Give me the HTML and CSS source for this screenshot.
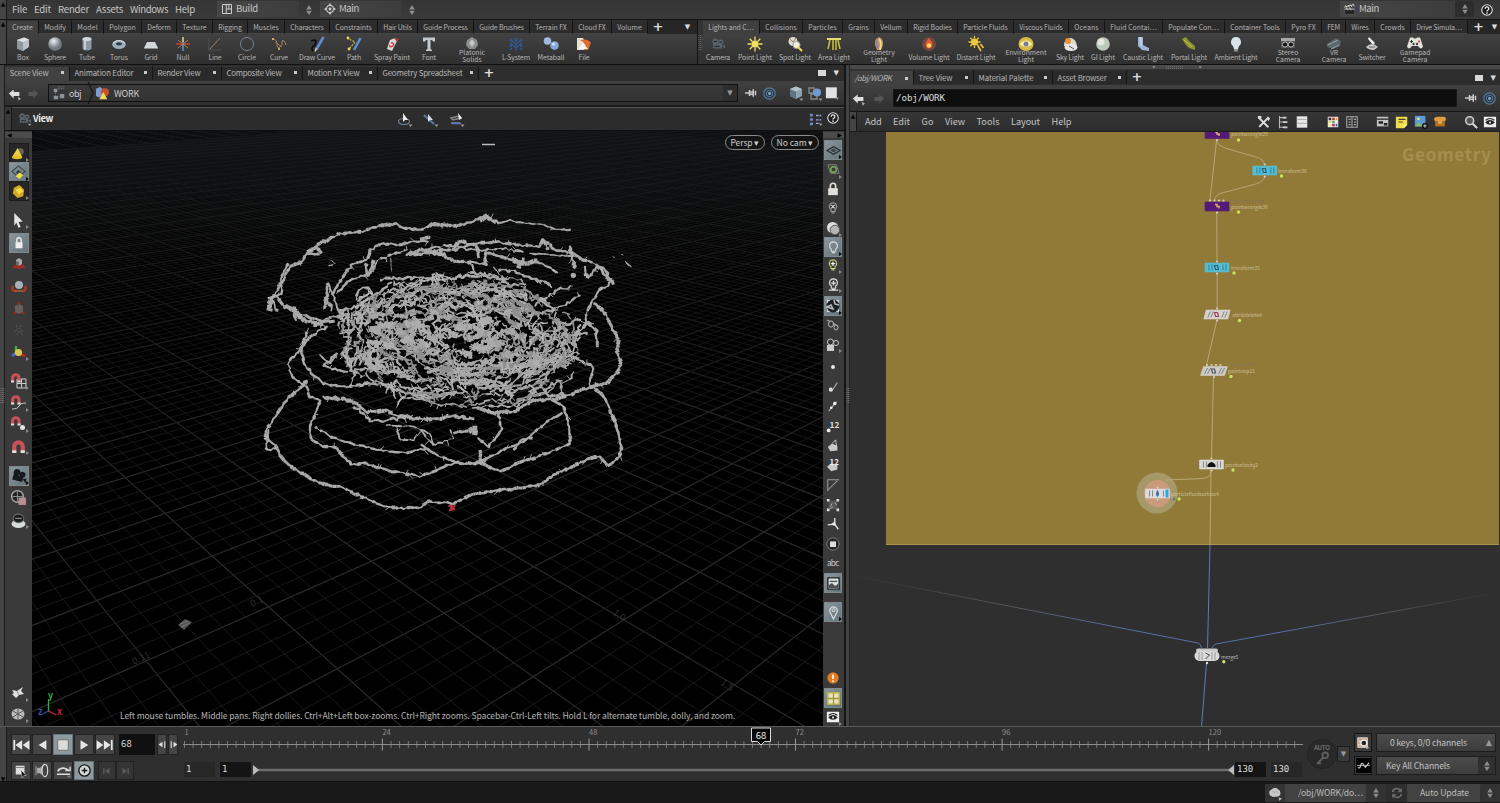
FILE: index.html
```html
<!DOCTYPE html>
<html lang="en">
<head>
<meta charset="utf-8">
<title>Scene</title>
<link rel="stylesheet" href="styles.css">
</head>
<body>
<div class="app">
  <header class="menubar">
    <div class="grip">▲</div>
    <nav class="menus">
      <span data-fit="15">File</span><span data-fit="17">Edit</span><span data-fit="31">Render</span><span data-fit="27">Assets</span><span data-fit="38">Windows</span><span data-fit="20">Help</span>
    </nav>
    <div class="desk"><i data-i="layout"></i><span data-fit="22">Build</span></div><div class="updown"><i data-i="updown"></i></div>
    <div class="desk desk2"><i data-i="target"></i><span data-fit="20">Main</span></div><div class="updown"><i data-i="updown"></i></div>
    <div class="grow"></div>
    <div class="desk desk3"><i data-i="clap"></i><span data-fit="20">Main</span></div><div class="updown dark"><i data-i="updown"></i></div>
    <div class="helpicon"><i data-i="help"></i></div>
  </header>

  <section class="shelves">
    <div class="grip">▲</div>
    <div class="shelf shelf-a"><div class="stabs" id="stabsA"></div><div class="tools" id="toolsA"></div></div>
    <div class="shelfsplit"><i data-i="dots"></i></div>
    <div class="shelf shelf-b"><div class="stabs" id="stabsB"></div><div class="tools" id="toolsB"></div></div>
  </section>

  <main class="panes">
    <div class="edge"><i data-i="dots"></i></div>
    <section class="pane scene">
      <div class="ptabs" id="ptabsA"></div>
      <div class="pathbar">
        <i data-i="back"></i><i data-i="fwd"></i>
        <div class="crumbs"><i data-i="objnet"></i><span data-fit="12">obj</span><i class="chev" data-i="chev"></i><i data-i="shapes"></i><span class="cur" data-fit="25">WORK</span><div class="grow"></div><div class="drop">▼</div></div>
        <div class="pathicons"><i data-i="pin"></i><i class="rad" data-i="radar"></i><i class="gapl" data-i="cubeb"></i><i data-i="ghost"></i><i data-i="white"></i></div>
      </div>
      <div class="viewbar">
        <div class="grip">▲</div>
        <i class="vcam" data-i="camera"></i><b data-fit="20">View</b>
        <div class="vmid"><i data-i="sel1"></i><i data-i="sel2"></i><i data-i="sel3"></i></div>
        <div class="vend"><i data-i="nodes"></i><i data-i="help"></i></div>
      </div>
      <div class="viewrow">
        <div class="side left"><div class="nub">◀</div><div class="col" id="leftcol"></div></div>
        <div class="viewport">
          <svg id="scene" viewBox="32 131 791 595" width="791" height="595"></svg>
          <div class="pill persp"><span data-fit="22">Persp</span> ▾</div>
          <div class="pill cam"><span data-fit="30">No cam</span> ▾</div>
          <div class="hint"><span data-fit="615">Left mouse tumbles. Middle pans. Right dollies. Ctrl+Alt+Left box-zooms. Ctrl+Right zooms. Spacebar-Ctrl-Left tilts. Hold L for alternate tumble, dolly, and zoom.</span></div>
        </div>
        <div class="side right"><div class="nub r">▶</div><div class="col" id="rightcol"></div></div>
      </div>
    </section>
    <div class="vsplit"><i data-i="dots"></i></div>
    <section class="pane network">
      <div class="hsplit"><i data-i="dotsh"></i></div>
      <div class="ptabs" id="ptabsB"></div>
      <div class="pathbar npath">
        <i data-i="back"></i><i data-i="fwd"></i>
        <div class="field"><span data-fit="49">/obj/WORK</span></div>
        <div class="pathicons"><i data-i="pin"></i><i class="rad" data-i="radar"></i></div>
      </div>
      <div class="nmenu">
        <div class="grip">▲</div>
        <nav class="nmenus"><span data-fit="16.5">Add</span><span data-fit="17">Edit</span><span data-fit="12">Go</span><span data-fit="20">View</span><span data-fit="23">Tools</span><span data-fit="29">Layout</span><span data-fit="20">Help</span></nav>
        <div class="nicons"><i data-i="wrench"></i><i data-i="tree"></i><i data-i="list"></i><i class="g2" data-i="palette"></i><i data-i="table"></i><i class="g2" data-i="netbox"></i><i data-i="sticky"></i><i data-i="image"></i><i data-i="box3"></i><i class="g2" data-i="search"></i><i data-i="eye"></i></div>
      </div>
      <svg id="graph" viewBox="850 132 650 594" width="650" height="594"></svg>
    </section>
  </main>

  <section class="playbar">
    <div class="grip low">▼</div>
    <div class="transport">
      <div class="btns"><i data-i="first"></i><i data-i="rev"></i><i class="on" data-i="stop"></i><i data-i="play"></i><i data-i="last"></i><div class="frame"><span data-fit="11">68</span></div><i class="nar" data-i="stepb"></i><i class="nar" data-i="stepf"></i></div>
      <div class="btns small"><i data-i="tlmenu"></i><i data-i="speaker"></i><i data-i="loop"></i><i class="on" data-i="clock"></i><i class="dim" data-i="kprev"></i><i class="dim" data-i="knext"></i></div>
    </div>
    <div class="timeline">
      <svg id="ticks" viewBox="180 728 1126 30" width="1126" height="30"></svg>
      <div class="range"><div class="num lite">1</div><div class="num">1</div><svg class="slider" viewBox="0 0 983 14" width="983" height="14"><path d="M4 7H978" stroke="#6d6d6d" stroke-width="2.4"/><path d="M1 2l6 5-6 5zM982 2l-6 5 6 5z" fill="#bbb"/></svg><div class="num r">130</div><div class="num lite">130</div></div>
    </div>
    <div class="auto"><i data-i="auto"></i><div class="autodrop">▼</div></div>
    <div class="keys">
      <div class="krow"><i data-i="keyset"></i><div class="kbtn"><span data-fit="77">0 keys, 0/0 channels</span><em>▲</em></div></div>
      <div class="krow"><i data-i="wave"></i><div class="kbtn kall"><span data-fit="64">Key All Channels</span><i data-i="updown"></i></div></div>
    </div>
  </section>

  <footer class="status">
    <div class="brain"><i data-i="brain"></i></div>
    <div class="sbtn"><span data-fit="65">/obj/WORK/do…</span></div><i data-i="updown"></i><i class="refresh" data-i="refresh"></i>
    <div class="sbtn wide"><span data-fit="49">Auto Update</span></div><i data-i="updown"></i>
  </footer>
</div>
<script src="app.js"></script>
</body>
</html>
```
FILE: styles.css
```css
* { box-sizing: border-box; }
body { margin: 0; background: #1a1a1a; overflow: hidden; }
.app { width: 1500px; height: 803px; display: flex; flex-direction: column; font-family: "Noto Sans CJK SC", "Noto Sans", sans-serif; color: #b9b9b9; font-size: 8px; line-height: 1; white-space: nowrap; }
i, em { font-style: normal; display: block; }
i svg { display: block; overflow: visible; }
span { display: inline-block; }
.grow { flex: 1; }
.grip { width: 7px; background: #454545; color: #050505; font: 6px/7px "DejaVu Sans", sans-serif; text-align: center; border-right: 1px solid #161616; flex: none; overflow: hidden; }

.menubar { height: 20px; display: flex; background: linear-gradient(#353535, #3a3a3a); border-bottom: 1px solid #141414; font-size: 9.6px; color: #c6c6c6; }
.menus { display: flex; gap: 7px; padding-left: 5px; width: 210px; align-items: center; }
.desk { width: 82px; margin: 1px 0 2px; background: linear-gradient(90deg, #464646, #3d3d3d); display: flex; align-items: center; padding-left: 4px; gap: 3px; }
.desk2 { width: 82px; margin-left: 2px; }
.desk3 { width: 115px; padding-left: 3px; }
.updown { width: 19px; display: flex; align-items: center; justify-content: center; }
.updown.dark { background: #2d2d2d; margin: 1px 0 2px; }
.helpicon { width: 26px; display: flex; align-items: center; justify-content: center; }

.shelves { height: 45px; display: flex; border-bottom: 1px solid #101010; }
.shelf { display: flex; flex-direction: column; }
.shelf-a { width: 690px; }
.shelf-b { width: 797px; }
.shelfsplit { width: 6px; background: #333; border-left: 1px solid #111; display: flex; align-items: center; justify-content: center; }
.stabs { height: 14px; background: #262626; display: flex; font-size: 6.9px; color: #b4b4b4; }
.stab { border-right: 1.5px solid #121212; border-top: 1px solid #303030; display: flex; align-items: center; justify-content: center; background: #2c2c2c; border-bottom: 1px solid #454545; }
.stab.on { background: #3f3f3f; border-bottom-color: #3f3f3f; }
.splus { width: 20px; font: bold 13px/13px "DejaVu Sans", sans-serif; text-align: center; color: #ddd; }
.scaret { margin-left: auto; width: 19px; font: 7px/14px "DejaVu Sans", sans-serif; text-align: center; color: #ddd; }
.shelf-b .splus { width: 21px; }
.shelf-b .scaret { width: 11px; margin-left: 0; }
.tools { height: 30px; background: linear-gradient(#414141, #2f2f2f); display: flex; }
.tool { display: flex; flex-direction: column; align-items: center; font-size: 6.9px; color: #b6b6b6; padding-top: 2px; }
.tool svg { width: 16px; height: 16px; }
.tool span { line-height: 7px; text-align: center; margin-top: 1.5px; }
.tool.two { font-size: 6.8px; }
.tool.two span { margin-top: -3px; }

.panes { height: 661px; display: flex; background: #222; }
.edge { width: 5px; background: #454545; border-right: 1px solid #1a1a1a; display: flex; align-items: center; }
.pane { display: flex; flex-direction: column; }
.scene { width: 839px; }
.network { width: 650px; }
.vsplit { width: 6px; background: #434343; border-left: 2px solid #141414; border-right: 1px solid #222; display: flex; align-items: center; }
.hsplit { height: 5px; background: #484848; display: flex; justify-content: center; align-items: center; border-bottom: 1px solid #333; }
.ptabs { height: 16px; background: #2d2d2d; display: flex; padding-top: 1px; font-size: 7.8px; color: #b8b8b8; }
.ptab { border-right: 1.5px solid #151515; background: #2a2a2a; display: flex; align-items: center; justify-content: space-between; padding: 0 5px 2px 4.5px; border-top: 1px solid #333; margin-bottom: 1px; }
.ptab.on { background: #414141; margin-bottom: 0; padding-bottom: 3px; }
.ptab u { width: 3px; height: 3px; background: #c9c9c9; }
.network .ptab.on { font-style: italic; }
.pplus { width: 20px; text-align: center; font: bold 13px/13px "DejaVu Sans", sans-serif; color: #ddd; }
.pend { margin-left: auto; display: flex; align-items: center; gap: 8px; padding: 0 5px 2px 0; font: 7px/14px "DejaVu Sans", sans-serif; color: #ddd; }
.pend b { width: 8px; height: 6px; background: #d8d8d8; }
.network .ptabs { height: 15px; padding-top: 0; }
.network .pend { padding-right: 4px; padding-bottom: 0; }
.network .ptab, .network .ptab.on { padding-bottom: 0; }
.pathbar { height: 24px; background: linear-gradient(#414141, #303030); display: flex; align-items: center; padding-left: 3px; font-size: 9px; color: #ccc; }
.pathbar > i { width: 18px; }
.scene .pathbar > i:nth-child(2) { width: 22px; }
.crumbs { width: 690px; height: 18px; border: 1px solid #111; background: linear-gradient(#3a3a3a, #333); display: flex; align-items: center; gap: 3px; padding-left: 3px; }
.crumbs .chev { width: 9px; }
.crumbs .cur { margin-left: 2px; }
.drop { width: 14px; align-self: stretch; background: #2e2e2e; font: 7px/16px "DejaVu Sans", sans-serif; text-align: center; color: #999; }
.pathicons { display: flex; gap: 2.5px; align-items: center; margin-left: 7px; }
.pathicons .rad { margin-left: 3px; }
.pathicons .gapl { margin-left: 10px; }
.npath { height: 26px; padding-left: 2px; }
.npath > i { width: 20px; }
.field { width: 564px; margin-left: 1px; height: 18px; background: #0e0e0e; border: 1px solid #181818; padding: 3px 2px; font: 9.2px/10px "DejaVu Sans Mono", monospace; color: #ddd; }
.npath .pathicons { margin-left: 8px; }
.viewbar { height: 26px; margin-top: 0; background: #2c2c2c; border-top: 2px solid #191919; box-shadow: inset 0 1px #555; border-bottom: 1px solid #101010; display: flex; align-items: center; font-size: 9px; color: #eee; }
.viewbar .grip { align-self: stretch; background: #3a3a3a; }
.vcam { margin: 0 1px 0 5px; }
.vmid { display: flex; gap: 10px; margin-left: 344px; }
.vend { display: flex; gap: 4px; margin-left: auto; padding-right: 5px; }
.viewrow { display: flex; height: 595px; }
.side { width: 27px; background: #3a3a3a; display: flex; flex-direction: column; }
.side.right { width: 21px; }
.nub { height: 6px; margin-top: 1px; background: #4b4b4b; font: 6px/6px "DejaVu Sans", sans-serif; color: #000; padding-left: 2px; }
.nub.r { text-align: right; padding-right: 2px; }
.col { display: flex; flex-direction: column; align-items: center; }
.right .col { padding-right: 1px; }
.cell { width: 18px; height: 18px; display: flex; align-items: center; justify-content: center; flex: none; position: relative; }
.right .cell { width: 16px; }
.cell.on { background: linear-gradient(135deg, #8a979b, #64747a); outline: 1px solid #7c8a90; }
.cell.dk { background: #262626; outline: 1px solid #1c1c1c; }
.cell.arrow::after { content: ""; position: absolute; right: -1px; bottom: 0; border-left: 3px solid #888; border-top: 2px solid transparent; border-bottom: 2px solid transparent; }
.cell.on.arrow::after { border-left-color: #0b0b0b; }
.viewport { position: relative; width: 791px; height: 595px; background: #000; overflow: hidden; }
.viewport > svg { display: block; }
.pill { position: absolute; top: 4px; height: 15px; border: 1px solid #8b8b8b; border-radius: 8px; background: #141414; font-size: 8.6px; line-height: 12px; text-align: center; color: #ccc; }
.persp { left: 693px; width: 40px; }
.cam { left: 739px; width: 48px; }
.hint { position: absolute; left: 88px; top: 579px; font-size: 8.6px; line-height: 10px; color: #b4b4b4; }

.nmenu { height: 21px; background: linear-gradient(#363636, #2d2d2d); border-top: 1px solid #151515; border-bottom: 1px solid #1c1c1c; display: flex; font-size: 9.2px; color: #c4c4c4; }
.nmenus { display: flex; align-items: center; padding-left: 8px; gap: 11.5px; width: 400px; }
.nicons { display: flex; align-items: center; gap: 5px; }
.nicons .g2 { margin-left: 12px; }
#graph { display: block; background: #2f2f2f; }

.playbar { height: 56px; background: #2f2f2f; border-top: 1px solid #5a5a5a; display: flex; border-bottom: 1px solid #111; }
.grip.low { line-height: 104px; }
.transport { width: 173px; padding: 7px 0 0 4px; display: flex; flex-direction: column; gap: 6px; }
.btns { display: flex; height: 21px; gap: 1px; }
.btns > i { width: 20px; background: #454545; border: 1px solid #222; display: flex; align-items: center; justify-content: center; }
.btns > i.on { background: #8e9a9e; border-color: #66757b; }
.btns .nar { width: 10px; margin-left: 0; }
.btns.small { height: 19px; }
.btns .dim { width: 18px; background: #353535; margin: 0 -1px 0 0; }
.btns.small .on + .dim { margin-left: 3px; }
.frame { width: 36px; margin-right: 1px; background: #101010; font-size: 9.4px; line-height: 18px; padding-left: 2px; margin-left: 3px; color: #ddd; }
.timeline { width: 1126px; padding-top: 0; }
#ticks { display: block; }
.range { display: flex; align-items: center; height: 15px; margin-top: 5px; padding-left: 4px; }
.num { width: 31px; height: 15px; background: #141414; color: #ddd; font: 9px/15px "DejaVu Sans Mono", monospace; padding-left: 2px; }
.num.lite { background: #272727; margin-right: 5px; }
.num.r + .num { margin-left: 5px; margin-right: 0; }
.slider { display: block; flex: none; }
.range .num + .slider { margin-left: 1px; }
.auto { display: flex; align-items: center; padding-left: 1px; width: 47px; }
.autodrop { width: 13px; height: 16px; background: #3a3a3a; border: 1px solid #1d1d1d; font: 7px/14px "DejaVu Sans", sans-serif; text-align: center; color: #999; }
.keys { padding: 6px 0 0 1px; display: flex; flex-direction: column; gap: 4px; }
.krow { display: flex; height: 19px; gap: 4px; }
.krow > i { width: 18px; background: #3c3c3c; border: 1px solid #161616; display: flex; align-items: center; justify-content: center; }
.kbtn { width: 120px; background: linear-gradient(#4c4c4c, #3c3c3c); border: 1px solid #1d1d1d; display: flex; align-items: center; justify-content: space-between; padding: 0 3px 1px 13px; font-size: 8.6px; color: #c2c2c2; }
.kbtn em { font: 8px/9px "DejaVu Sans", sans-serif; color: #999; }
.kall { padding: 0 0 1px 9px; }
.kall i { width: 17px; align-self: stretch; background: #303030; display: flex; align-items: center; justify-content: center; margin-bottom: -1px; }
.status { height: 21px; background: #191919; display: flex; align-items: center; padding-left: 1265px; font-size: 8.6px; color: #bdbdbd; }
.status > i, .brain { height: 18px; width: 20px; display: flex; align-items: center; justify-content: center; background: #333; }
.sbtn { width: 81px; height: 18px; background: #424242; display: flex; align-items: center; padding: 0 0 1px 13px; }
.status .refresh { width: 21px; background: #2d2d2d; }
.wide { width: 73px; }
```
FILE: app.js
```js
const G = '#cfcfcf';
const tri = '<path d="M11.5 13.5h4l-2 2.4z" fill="#999"/>';
const magnet = '<path d="M2 14V8a6 6 0 0 1 12 0v6h-4V8a2 2 0 0 0-4 0v6z" fill="#c8505a"/><path d="M2 11.500h4V14H2zM10 11.500h4V14h-4z" fill="#ddd"/>';
const smag = '<path d="M0 9V5a4.800 4.800 0 0 1 9.600 0v4H6.500V5a1.700 1.700 0 0 0-3.400 0v4z" fill="#c8505a"/><path d="M0 7.500h3.100V9.500H0zM6.500 7.500h3.100V9.500H6.500z" fill="#ddd"/>';
const bulb = c => `<path d="M8 2a4.2 4.2 0 0 0-2.3 7.7V12h4.6V9.7A4.2 4.2 0 0 0 8 2z" fill="none" stroke="${c}" stroke-width="1.2"/><path d="M6.2 13.5h3.6" stroke="${c}" stroke-width="1.4"/>`;
const star = (c, cx, cy, r, R) => { let s = ''; for (let k = 0; k < 8; k++) { const a = k * Math.PI / 4; s += `M${cx + r * Math.cos(a)} ${cy + r * Math.sin(a)}L${cx + R * Math.cos(a)} ${cy + R * Math.sin(a)}`; } return `<path d="${s}" stroke="${c}" stroke-width="1.3"/><circle cx="${cx}" cy="${cy}" r="${r}" fill="${c}"/>`; };
const cam = c => `<circle cx="5.5" cy="5.5" r="3" fill="${c}"/><circle cx="10.8" cy="6.2" r="2.6" fill="${c}"/><path d="M3 8h9v4.5H3zM12 10l3-1.6v4.4z" fill="${c}"/><path d="M4 5.5h3M9.5 6.2H12M4.5 10.4h5" stroke="#1b2226" stroke-width="1"/>`;

/* each entry: [size, markup on a 16-unit box] */
const ICONS = {
  layout: [12, `<path d="M2 2h12v12H2zM7 2v12M7 8h7M10.5 2v6" fill="none" stroke="${G}" stroke-width="1.3"/>`],
  target: [12, `<circle cx="8" cy="8" r="4.6" fill="none" stroke="${G}" stroke-width="1.4"/><circle cx="8" cy="8" r="1.9" fill="${G}"/><path d="M8 0l2 3H6zM8 16l-2-3h4zM0 8l3-2v4zM16 8l-3 2V6z" fill="${G}"/>`],
  clap: [13, `<path d="M2 7h12v7H2z" fill="#222" stroke="#555"/><path d="M1.500 5l12-3M3 3l2 3M6 2.500l2 3M9 2l2 3M12 1l2 3M2 7.500h12M4 6l2 3M8 6l2 3" stroke="${G}" stroke-width="1.1"/>`],
  updown: [10, '<path d="M8 0l4.500 7h-9zM8 16l4.500-7h-9z" fill="#8c8c8c"/>'],
  help: [12, '<circle cx="8" cy="8" r="7" fill="#1d1d1d" stroke="#ddd" stroke-width="1.500"/><path d="M5.600 6.200a2.400 2.400 0 1 1 3.500 2.100Q8 9 8 10" fill="none" stroke="#eee" stroke-width="1.800"/><circle cx="8" cy="12.200" r="1.100" fill="#eee"/>'],
  dots: [5, '<path d="M3 -16v48M8 -16v48M13 -16v48" stroke="#8a8a8a" stroke-width="2.500" stroke-dasharray="2.500 4"/>'],
  dotsh: [5, '<path d="M-22 5h54M-22 11h54" stroke="#8a8a8a" stroke-width="2.500" stroke-dasharray="2.500 4"/><path d="M-66 4h10l-5 7zM82 4h10l-5 7z" fill="#999"/>'],
  back: [13, '<path d="M1 8l6-5v3h7v5H7v3z" fill="#dedede"/><path d="M12 12l4 2-3 3z" fill="#aaa"/>'],
  fwd: [13, '<path d="M15 8L9 3v3H3v5h6v3z" fill="#555"/>'],
  objnet: [14, '<path d="M2 3h4v4H2zM2 11h5v4H2zM9 9h5v5H9z" fill="#8b9498"/><path d="M7 3h7M4 7v4M8 12h2M7 1h7" stroke="#666" stroke-width="1.200" stroke-dasharray="2 1"/>'],
  chev: [16, '<path d="M4 -3l5 11-5 11" fill="none" stroke="#151515" stroke-width="1.200"/>'],
  shapes: [13, '<path d="M0 2l5-2 3 2v8l-4 3-4-2z" fill="#7c9bd0"/><circle cx="11" cy="6.500" r="5" fill="#c9502c"/><path d="M9 6l5 9H4z" fill="#f0d95a"/>'],
  pin: [12, '<path d="M0 8h6M6 4v8M6 6.500h5v3H6M11 3v10M14 5v6" stroke="#ccc" stroke-width="2"/>'],
  radar: [13, '<circle cx="8" cy="8" r="7" fill="#26374a" stroke="#5b7893" stroke-width="1.400"/><circle cx="8" cy="8" r="4" fill="none" stroke="#5f809e" stroke-width="1.200"/><circle cx="8" cy="8" r="1.700" fill="#8db2d6"/>'],
  cubeb: [16, '<path d="M2 4l6-2.500L14 4v7l-6 3-6-3z" fill="#8ea3ad"/><path d="M2 4l6 2.500V14l-6-3z" fill="#5d7683"/><path d="M2 4l6-2.500L14 4 8 6.500z" fill="#b4c4cb"/>' + tri],
  ghost: [16, '<path d="M2 3h5v5H2zM4 9h6v5H4z" fill="none" stroke="#888" stroke-width="1.300"/><circle cx="10" cy="7.500" r="4" fill="#6f9bd0"/>' + tri],
  white: [14, '<path d="M1 1.500h12.500V14H1z" fill="#e2e2e2"/><path d="M12 13h4l-2 3z" fill="#999"/>'],
  sel1: [16, '<ellipse cx="7" cy="10.500" rx="5.500" ry="3" fill="none" stroke="#6d7f96" stroke-width="1.200"/><path d="M6 2l5 7H8L6 11z" fill="#eee"/>' + tri],
  sel2: [16, '<path d="M1 4l10 9" stroke="#5f78a0" stroke-width="2.200"/><path d="M5 3l5 6H7L5 11z" fill="#ddd"/>' + tri],
  sel3: [16, '<path d="M2 7l8-2 2 2-8 2zM2 12h9" fill="none" stroke="#888" stroke-width="1.500"/><path d="M3 12.500h9" stroke="#5b7bd0" stroke-width="1.500"/><path d="M9 2l4 5-3 2z" fill="#eee"/>' + tri],
  nodes: [14, '<path d="M1 2h3.500v3H1zM1 7h3.500v3H1zM1 12h3.500v3H1z" fill="#6d86c8"/><path d="M8 4h6M8 9h6M8 13h5" stroke="#93a7d6" stroke-width="1.600" stroke-dasharray="3 1"/>' + tri],
  camera: [15, cam('#5c6468') + tri],
  wrench: [14, '<path d="M2 3l11 11M13.500 2.500l-11 11" stroke="#ddd" stroke-width="2.200"/><path d="M1 1h4v3H1zM11 2l4 2-2 3" fill="#ddd"/>'],
  tree: [14, '<path d="M4 1v14M4 3h7M4 8h7M4 14h7" stroke="#bbb" stroke-width="1.200"/><path d="M8 2h4v2H8zM8 7h5v2H8zM8 13h5v2H8z" fill="#ccc"/>'],
  list: [14, '<path d="M2 1.500h12v13H2z" fill="#e6e6e6"/><path d="M2 5h12M2 9.500h12" stroke="#a5a5a5"/>'],
  palette: [14, '<path d="M2 2h12v12H2z" fill="#eee"/><path d="M3 3h3v3H3z" fill="#333"/><path d="M7 3h3v3H7z" fill="#d03030"/><path d="M11 3h2v3h-2z" fill="#e8a020"/><path d="M3 7h3v2H3z" fill="#e8d050"/><path d="M7 7h3v2H7z" fill="#50a050"/><path d="M3 10h3v3H3z" fill="#f0f080"/><path d="M7 10h3v3H7z" fill="#c03060"/><path d="M11 10h2v3h-2z" fill="#4060c0"/>'],
  table: [14, '<path d="M2 2h12v12H2zM8 2v12M4 5h2.500M4 8h2.500M4 11h2.500M10 5h2.500M10 8h2.500M10 11h2.500" fill="none" stroke="#a8a8a8" stroke-width="1.200"/>'],
  netbox: [14, '<path d="M1 2h13v11H1z" fill="#c4c4c4"/><path d="M1 4h13v1.500H1zM3 7h5v3H3zM9 9h4v3H9z" fill="#222"/>'],
  sticky: [14, '<path d="M1 2h13v9l-4 4H1z" fill="#f0dd4a"/><path d="M4 5h8M4 8h5" stroke="#444" stroke-width="1.300"/><path d="M14 11h-4v4z" fill="#fff6a8"/>'],
  image: [14, '<path d="M1 1h12v12H1z" fill="#5a9ad8"/><path d="M1 13l4-5 3 3 2-2 3 4z" fill="#8ab56a"/><circle cx="5" cy="4.500" r="1.600" fill="#f6e070"/><circle cx="12.500" cy="12.500" r="3.500" fill="#111"/><path d="M12.500 10.500v4M10.500 12.500h4" stroke="#ddd"/>'],
  box3: [14, '<path d="M1 4l3-2h9l2 2-1 3H2z" fill="#e09a40"/><path d="M2.500 7h11v6h-11z" fill="#b56f24"/><path d="M6 7h4v3H6z" fill="#e7b469"/>'],
  search: [14, '<circle cx="6.500" cy="6.500" r="4.500" fill="#555" stroke="#ccc" stroke-width="1.800"/><path d="M10 10l5 5" stroke="#ddd" stroke-width="2.400"/>'],
  eye: [14, '<path d="M1 2h14v12H1z" fill="#eee"/><path d="M2.500 8.500q5.500-5.500 11 0-5.500 5.500-11 0z" fill="#222"/><circle cx="8" cy="8.500" r="1.200" fill="#eee"/><path d="M3 6q5-4 10 0" fill="none" stroke="#222" stroke-width="1.200"/>'],
  first: [18, '<path d="M2 3.500v9" stroke="#e6e6e6" stroke-width="1.600"/><path d="M9 3.800v8.400L3 8zM15.500 3.800v8.400L9.500 8z" fill="#e6e6e6"/>'],
  last: [18, '<path d="M14 3.500v9" stroke="#e6e6e6" stroke-width="1.600"/><path d="M7 3.800v8.400L13 8zM.5 3.800v8.400L6.500 8z" fill="#e6e6e6"/>'],
  rev: [14, '<path d="M13 2.500v11L4 8z" fill="#e6e6e6"/>'],
  play: [14, '<path d="M4 2.500v11L13 8z" fill="#e6e6e6"/>'],
  stop: [14, '<path d="M2 2h12v12H2z" fill="#dcdcdc" stroke="#6a6a60"/>'],
  stepb: [9, '<path d="M8 3v10L1 8z" fill="#e0e0e0"/><path d="M12 2v12" stroke="#e0e0e0" stroke-width="2"/>'],
  stepf: [9, '<path d="M8 3v10l7-5z" fill="#e0e0e0"/><path d="M4 2v12" stroke="#e0e0e0" stroke-width="2"/>'],
  tlmenu: [14, '<path d="M2 2h10v10H2z" fill="#ddd"/><path d="M2 4h10" stroke="#777"/><path d="M8 7l6 6-3 .3L9 16z" fill="#111" stroke="#ddd" stroke-width=".6"/>'],
  speaker: [15, '<path d="M2 5h3l5-3v12l-5-3H2z" fill="#aaa"/><ellipse cx="10.500" cy="8" rx="3" ry="6.500" fill="#444" stroke="#ddd" stroke-width="1.200"/><path d="M1 3v10" stroke="#999"/>'],
  loop: [15, '<path d="M2 9a6 5 0 0 1 11-1" fill="none" stroke="#ddd" stroke-width="2"/><path d="M1 12h14M10 8h5V4" stroke="#ddd" stroke-width="1.500" fill="none"/><path d="M12 13.500h4l-2 2.400z" fill="#888"/>'],
  clock: [15, '<circle cx="8" cy="8" r="6" fill="#d5dadb" stroke="#1b1b1b" stroke-width="1.500"/><path d="M8 5v6M5 8h6" stroke="#1b1b1b" stroke-width="1.500" fill="none"/>'],
  kprev: [10, '<path d="M3 3v10" stroke="#5b5b5b" stroke-width="2"/><path d="M12 3v10L5 8z" fill="#5b5b5b"/>'],
  knext: [10, '<path d="M13 3v10" stroke="#5b5b5b" stroke-width="2"/><path d="M4 3v10l7-5z" fill="#5b5b5b"/>'],
  auto: [30, '<circle cx="8" cy="8" r="7.800" fill="#292929" stroke="#222" stroke-width=".4"/><circle cx="9.700" cy="8.700" r="1.500" fill="none" stroke="#5e5e5e" stroke-width="1"/><path d="M8.700 9.800l-3.300 3.500M6.300 12.300l1 1" stroke="#5e5e5e" stroke-width="1.100"/><text x="8" y="6" font-size="3.300" textLength="8.500" text-anchor="middle" fill="#6c6c6c" font-weight="bold">AUTO</text>'],
  keyset: [14, '<path d="M2 2h11v11H2z" fill="#caa98c"/><path d="M2 2h11v11H2zM2 6h5M2 10h5" fill="none" stroke="#ddd"/><circle cx="9" cy="8" r="3.300" fill="#222" stroke="#eee" stroke-width="1.300"/><path d="M11 11l4 2-3 2z" fill="#bbb"/>'],
  wave: [15, '<path d="M0 0h16v16H0z" fill="#050505"/><path d="M1 8h14" stroke="#ccc" stroke-width=".8"/><path d="M2 10q2 2 3-2t3-1 2 3 4-5" fill="none" stroke="#ccc" stroke-width="1.200"/>'],
  brain: [14, '<path d="M2 10Q0 6 4 4q4-4 8 0 3 2 2 6-2 3-5 2-4 2-7-2z" fill="#c8c8c8"/><path d="M12 13l4 1-3 3z" fill="#bbb"/><path d="M5 6l3 2M9 5l2 3" stroke="#999" stroke-width=".8"/>'],
  refresh: [14, '<path d="M3 7a5 5 0 0 1 9-2M13 9a5 5 0 0 1-9 2" fill="none" stroke="#6c6c6c" stroke-width="1.800"/><path d="M13.500 2v5h-5zM2.500 14V9h5z" fill="#6c6c6c"/>'],
  /* shelf tools */
  box: [16, '<path d="M2 4l7-2.500 5 2V11l-6 4-6-2.500z" fill="#b9c0c6"/><path d="M2 4l6 2v9l-6-2.500z" fill="#8f98a0"/><path d="M2 4l7-2.500 5 2L8 6z" fill="#dde1e4"/>'],
  sphere: [16, '<defs><radialGradient id="sp" cx=".4" cy=".3"><stop offset="0" stop-color="#eef1f3"/><stop offset="1" stop-color="#737b82"/></radialGradient></defs><circle cx="8" cy="8" r="6.800" fill="url(#sp)"/>'],
  tube: [16, '<path d="M3.500 3v10q4.500 3 9 0V3z" fill="#8b97a2"/><path d="M5 3v10.500h2V3z" fill="#c5ced6"/><ellipse cx="8" cy="3" rx="4.500" ry="2" fill="#cfd6dc"/>'],
  torus: [16, '<ellipse cx="8" cy="8.500" rx="6.800" ry="4.500" fill="#9eadb8"/><ellipse cx="8" cy="7.800" rx="3" ry="1.600" fill="#2f3a44"/><path d="M2 7q6-5 12 0" stroke="#d5dde3" fill="none"/>'],
  grid: [16, '<path d="M4 6h8l3 6H1z" fill="#d4d7d9"/><path d="M1 12h14v1H1z" fill="#888"/>'],
  nul: [16, '<path d="M8 1v14" stroke="#5b8fd8" stroke-width="1.600"/><path d="M1 8h14" stroke="#c43c30" stroke-width="1.600"/><path d="M3 4l10 8M3 12l10-8" stroke="#a08a50" stroke-width="1"/><path d="M8 1v5" stroke="#d8c060" stroke-width="1.600"/>'],
  line: [16, '<path d="M2 14L13 2" stroke="#a0806c" stroke-width="1"/><path d="M2 2v12h13" stroke="#555" fill="none" stroke-width=".8"/>'],
  circle: [16, '<circle cx="8" cy="8" r="6.600" fill="none" stroke="#7e8a98" stroke-width=".9"/>'],
  curve: [16, '<path d="M1 3q5 0 5 5t3 3 2-6q2-2 4 4" fill="none" stroke="#a08a60" stroke-width="1"/><path d="M4 6l7 5" stroke="#a65"/><circle cx="2" cy="3" r="1" fill="#e8d050"/><circle cx="8" cy="13" r="1" fill="#e8d050"/>'],
  draw: [16, '<path d="M2 5q7-3 4 4-5 3-2 6" fill="none" stroke="#0d0d0d" stroke-width="1.800"/><path d="M14.500 1L7 14" stroke="#5e8ed0" stroke-width="2.600"/><path d="M7.500 12L6 15.500" stroke="#d8c8a0" stroke-width="1.400"/>'],
  path: [16, '<path d="M1 2l8 4-6 7" fill="none" stroke="#c8b840" stroke-width="1.200" stroke-dasharray="2 1"/><path d="M14.500 2L8 14" stroke="#5e8ed0" stroke-width="2.600"/><circle cx="2" cy="2" r="1.400" fill="#e8e050"/><circle cx="3" cy="13" r="1.400" fill="#e8e050"/>'],
  spray: [16, '<path d="M6 4l5-2 2 3-5 10-5-2z" fill="#d8d8d8"/><path d="M7 7q4-1 2 3-4 2-3-1" fill="none" stroke="#c33" stroke-width="1.300"/><path d="M10 2l5 1-2 3z" fill="#b33"/>'],
  font: [16, '<path d="M2 1.500h12v4h-2L11 4H9.500v9l1.500 1v1H5v-1l1.500-1V4H5L4 5.500H2z" fill="#c3cace"/>'],
  platonic: [16, '<path d="M8 1l5 3 1 5-3 4H5L2 9l1-5z" fill="#8a8c8e"/><path d="M8 3l3 4-3 4-3-4z" fill="#c5c5c5"/>'],
  lsys: [16, '<path d="M8 15V5M8 12L2 7M8 12l6-5M8 9L3 3M8 9l5-6M8 6l-1-5M8 6l2-4M5 9l-4 1M11 9l4 1M5 6L1 4M11 6l4-2M4 12l-2 2M12 12l2 2M3 8v3M13 8v3" stroke="#2f5b94" stroke-width="1.100"/>'],
  meta: [16, '<circle cx="4.500" cy="5" r="3.800" fill="#9dbbe0"/><circle cx="11.500" cy="9.500" r="4.300" fill="#86aadb"/><circle cx="10.500" cy="8" r="1.600" fill="#d4e4f8"/>'],
  file: [16, '<path d="M1 2h6l1 2h3v10H1z" fill="#e8e0d0"/><path d="M4 4q8-2 11 3l-3 7H8q4-6-4-10z" fill="#e46a2c"/><path d="M2 13l5-6 5 6z" fill="#f4f4f4"/>'],
  camd: [16, cam('#56636b')],
  point: [16, star('#f0e260', 8, 8, 3.600, 7.500)],
  spot: [16, '<circle cx="6" cy="5.500" r="4.500" fill="#d9d9d9"/><path d="M3 3l3 3 3-4" stroke="#b08050" fill="none"/><circle cx="9.500" cy="9" r="3.600" fill="#f4f1d0" stroke="#999"/><path d="M11 11l4 4" stroke="#e8e050" stroke-width="2"/>'],
  area: [16, '<path d="M1 2h14v2H1z" fill="#e3dc70"/><path d="M4 4L2 13M7 4v10M10 4v10M12 4l2 9" stroke="#c9c238" stroke-width="1.500"/>'],
  geo: [16, '<path d="M8 1q5 2 4 8l-2 5H6L4 9q-1-6 4-8z" fill="#b58c78"/><path d="M8 3q3 3 1 11" stroke="#f0e070" stroke-width="2" fill="none"/><path d="M5 4l1 8" stroke="#88a" stroke-width="1.500"/>'],
  vol: [16, '<circle cx="8" cy="8" r="7" fill="#6e4a44"/><path d="M8 2q5 5 3 9-3 3-6 0-2-4 3-9z" fill="#e85a28"/><circle cx="8" cy="9.500" r="2.200" fill="#f8d860"/>'],
  dist: [16, star('#efc93c', 6.500, 6, 3.600, 6) + '<path d="M10 10l3 5M12.500 8l3 4" stroke="#efc93c" stroke-width="1.600"/>'],
  env: [16, '<ellipse cx="8" cy="8" rx="7.500" ry="7" fill="#d9ba48"/><path d="M1.500 8q6.500-7 13 0-6.500 6-13 0z" fill="#fff0a0"/><circle cx="8" cy="8" r="2.500" fill="#6f7fa0"/>'],
  sky: [16, '<path d="M2 10q0-8 7-8 5 1 6 8z" fill="#e0dccc"/><circle cx="6" cy="5" r="3" fill="#e8903c"/><ellipse cx="9" cy="11.500" rx="6.500" ry="3.500" fill="#e6e6e6"/><path d="M7 10l5 3" stroke="#555"/>'],
  gi: [16, '<circle cx="8" cy="8" r="6.800" fill="#bcc8b8"/><circle cx="6" cy="6" r="3.500" fill="#e6e8e0"/>'],
  caustic: [16, '<path d="M3 1h5v8l6 3v3l-7-1-4-4z" fill="#9db5d2"/><path d="M4 2h2v8" stroke="#dfe8f2" fill="none"/>'],
  portal: [16, '<path d="M1 3l4-2 3 4 6 5v4L8 12 5 9z" fill="#8f9630"/><path d="M3 4l8 7" stroke="#b9c050"/>'],
  amb: [16, '<path d="M8 1a5 5 0 0 0-3 9l1 3h4l1-3a5 5 0 0 0-3-9z" fill="#d9e4e8"/><path d="M6 13h4v2.500H6z" fill="#8d9598"/>'],
  stereo: [16, '<path d="M1 2h14v4H1z" fill="#a8a8a8"/><path d="M1 5h14v7H1z" fill="#555"/><circle cx="5" cy="8.500" r="2.600" fill="#151515" stroke="#bbb"/><circle cx="11" cy="8.500" r="2.600" fill="#151515" stroke="#bbb"/>'],
  vr: [16, '<path d="M1 8l9-6 5 3-1 5-7 3-6-2z" fill="#59666c"/><path d="M2 9l10-5M5 13l8-4" stroke="#9aa5a9"/>'],
  switcher: [16, '<path d="M5 1l6 6-2 2-5-6z" fill="#eee"/><path d="M2 11q6-6 12 0l-4 3q-6 0-8-3z" fill="#c9c9c9"/><path d="M5 11h6" stroke="#666"/>'],
  pad: [16, '<path d="M3 1.500h3l1 1h2l1-1h3l3 9q-2 4-5-.5H5Q2 14.500 0 10.500z" fill="#e4e0da"/><path d="M4.500 4v3M3 5.500h3" stroke="#333"/><circle cx="12" cy="5.500" r="1" fill="#b33"/><circle cx="6.500" cy="8" r="1.200" fill="#444"/><circle cx="10" cy="8" r="1.200" fill="#444"/>'],
  /* side columns */
  coney: [15, '<circle cx="10" cy="6" r="3.500" fill="#666"/><path d="M7 2l5 10H1z" fill="#efcf3a"/><ellipse cx="6.500" cy="12" rx="5.500" ry="2" fill="#e0bd2a"/>'],
  gridy: [15, '<path d="M8 1l7 6-7 6-7-6z" fill="none" stroke="#3d4645" stroke-width="1.200"/><path d="M8 5l3 3-3 3-3-3z" fill="#3a4240"/><path d="M9 8l4 3-4 4-4-3z" fill="#f0dd4a"/>'],
  cuby: [15, '<path d="M3 4l6-3 5 5-1 7-6 2-5-5z" fill="#d6aa20"/><path d="M5 6l5-2 3 4-5 3z" fill="#f4d94c"/>'],
  arrow: [17, '<path d="M4 1l8 8-4 .4 2 4.600-2 .8-2-4.600L4 13z" fill="#e4e4e4"/>'],
  lock: [14, '<path d="M4 7h8v7H4z" fill="#eee"/><path d="M5.500 7V4.500a2.500 2.500 0 0 1 5 0V7" fill="none" stroke="#eee" stroke-width="1.600"/>'],
  move: [16, '<path d="M1 12l4-4 3 3 3-3 4 4-4 0-3 1-3-1z" fill="#a52a22"/><path d="M8 2l3 2v4L8 10 5 8V4z" fill="#a9aaa4"/><path d="M5 5l3 1v4L5 8z" fill="#6c6c6c"/>'],
  rot: [16, '<path d="M2 8q-2 5 3 5M14 8q2 5-3 5" fill="none" stroke="#a83a20" stroke-width="2.600"/><path d="M4 13h8" stroke="#c06030" stroke-width="1.400"/><circle cx="8" cy="7" r="4" fill="#a7b0b8"/>'],
  scl: [16, '<path d="M8 1l2 3H6zM1 14l4-3v3zM15 14l-4-3v3z" fill="#9c2424"/><path d="M4 6l4-2 4 2v6l-4 2-4-2z" fill="#6a5c5c"/>'],
  pose: [16, '<path d="M5 3l2 4-4 3M10 3l-1 4 4 3M8 9l-3 5M9 9l3 5" stroke="#5c5c5c" fill="none" stroke-dasharray="2 1"/>'],
  handles: [16, '<path d="M5 2v6" stroke="#3fae3f" stroke-width="2.400"/><path d="M5 9l-4 3" stroke="#4a66c0" stroke-width="3"/><path d="M6 9l8 3" stroke="#c22" stroke-width="2.600"/><circle cx="7.500" cy="8.500" r="3.600" fill="#d8c850"/>'],
  mgrid: [16, '<path d="M6 6h9v9H6zM10.500 6v9M6 10.500h9" fill="none" stroke="#ccc"/>' + smag],
  mcurve: [16, '<path d="M1 14q6 0 7-3t7-3" stroke="#ccc" fill="none"/>' + smag],
  mpt: [16, smag + '<circle cx="11.500" cy="11.500" r="2.500" fill="#dfe6df"/>'],
  mag: [17, magnet],
  cams: [18, '<g transform="rotate(15 8 8)">' + cam('#15191b') + '</g>'],
  wheel: [17, '<circle cx="7" cy="7" r="5.500" fill="#222" stroke="#aaa" stroke-width="1.300"/><path d="M7 2v10M2 7h10" stroke="#888"/><path d="M8 8h7v7H8z" fill="#b98e92"/>'],
  drum: [17, '<ellipse cx="8" cy="11" rx="6.500" ry="4" fill="#d6dada"/><ellipse cx="8" cy="6" rx="5" ry="4" fill="#1b1b1b" stroke="#666"/><path d="M5 6h6" stroke="#999"/>'],
  flag: [16, '<path d="M1 5l5 1 6-4-2 4 3 3-5 1-3 3-4-4 2-1z" fill="#e0e0e0"/><path d="M6 6l2 4" stroke="#888"/>'],
  disc: [16, '<ellipse cx="7" cy="8" rx="6.500" ry="5.500" fill="#bbb"/><path d="M2 5l10 6M12 5L2 11M7 3v10" stroke="#5a5a5a"/>'],
  plane: [15, '<path d="M1 9l7-4 7 4-7 4z" fill="none" stroke="#232b2c" stroke-width="1.300"/><path d="M4.500 9L8 7l3.500 2L8 11z" fill="#394446"/>'],
  greenc: [15, '<path d="M2 3l9 0 3 9-9 0z" fill="none" stroke="#888"/><circle cx="8" cy="8" r="3" fill="none" stroke="#7fae50" stroke-width="1.500"/>'],
  padlock: [14, '<path d="M2.500 7h11v8h-11z" fill="#e2e0da"/><path d="M5 7V4.500a3 3 0 0 1 6 0V7" fill="none" stroke="#e2e0da" stroke-width="1.800"/>'],
  bulbx: [14, bulb('#999') + '<path d="M6 4.500l4 4M10 4.500l-4 4" stroke="#ddd" stroke-width="1.200"/>'],
  ballw: [15, '<circle cx="7" cy="7" r="6" fill="#ddd"/><circle cx="9.500" cy="9.500" r="5" fill="#b5b5b5" stroke="#555"/>'],
  bulb: [15, bulb('#d4dadc')],
  bulby: [14, bulb('#c5d07a') + '<path d="M8 4v5M5.500 6.500h5" stroke="#eee" stroke-width="1.500"/>'],
  bulbw: [15, bulb('#ddd') + '<path d="M8 4v5M5.500 6.500h5M3 14h10" stroke="#ddd" stroke-width="1.500"/>'],
  ball: [16, '<path d="M2 2h12v12H2z" fill="#d6dadb"/><circle cx="8" cy="8" r="6.500" fill="#1d2224"/><path d="M2 9l4-2 2 4zM9 2l1 4 4 1" stroke="#bbb" stroke-width="1.500" fill="none"/>'],
  glasses: [16, '<path d="M2 3l6 3 5 4" stroke="#aaa" fill="none" stroke-width="1.300"/><ellipse cx="6" cy="7" rx="2.500" ry="3" fill="#333" stroke="#bbb"/><ellipse cx="11" cy="10.500" rx="2" ry="2.500" fill="#333" stroke="#bbb"/>'],
  glassc: [16, '<circle cx="5.500" cy="6" r="3" fill="#333" stroke="#ccc"/><circle cx="11" cy="7" r="2.500" fill="#333" stroke="#ccc"/><path d="M2 9h7v6H2z" fill="#ccc"/>'],
  dot: [14, '<circle cx="8" cy="8" r="2.200" fill="#eee"/>'],
  tick: [14, '<path d="M5 9l2 3 6-9" fill="none" stroke="#aaa" stroke-width="1.200"/><circle cx="5.500" cy="11" r="2.300" fill="#ddd"/>'],
  vec: [14, '<path d="M3 14L12 3" stroke="#bbb" stroke-width="1.300"/><circle cx="10" cy="5" r="2" fill="#eee"/><circle cx="6" cy="10" r="1.500" fill="#eee"/>'],
  n12: [14, '<circle cx="3" cy="13" r="2.200" fill="#eee"/><text x="4" y="10" font-size="9.500" font-weight="bold" fill="#ddd">12</text>'],
  prim: [14, '<path d="M2 9l5-4 6 3v5l-8 1z" fill="#c9c9c9"/><path d="M7 5l4-4 1 7" stroke="#ddd" fill="none"/>'],
  prim12: [14, '<path d="M1 10l5-4 7 2v5l-7 2z" fill="#c9c9c9"/><text x="4" y="8" font-size="9" font-weight="bold" fill="#eee">12</text>'],
  corner: [14, '<path d="M2 15V2h13M2 14L13 3" fill="none" stroke="#999" stroke-width="1.200"/>'],
  uv: [14, '<path d="M3 3h10v10H3z" fill="#555"/><path d="M1 1h3v3H1zM12 1h3v3h-3zM1 12h3v3H1zM12 12h3v3h-3z" fill="#ddd"/><path d="M5 10l2-4M10 5l2 3M5 12l3-2" stroke="#bbb" fill="none"/>'],
  axis: [14, '<path d="M10 8V1M10 8L2 9M10 8l4 6" stroke="#ddd" stroke-width="1.600"/><circle cx="9" cy="8" r="2" fill="#eee"/>'],
  circmenu: [14, '<circle cx="8" cy="8" r="7" fill="#222" stroke="#888"/><path d="M4.500 5h7v6.500h-7z" fill="#ddd"/>'],
  abc: [14, '<text x="8" y="11" font-size="9.500" textLength="14" text-anchor="middle" fill="#c8c8c8">abc</text>'],
  pic: [15, '<path d="M2 2h12v12H2z" fill="#dfe3e3" stroke="#222" stroke-width="1.500"/><path d="M3 10q3-4 5-1t5-1v5H3z" fill="#4b5150"/><path d="M4 5h8v1.500H4z" fill="#555"/>'],
  mark: [15, '<path d="M8 15L4.500 8a4 4 0 1 1 7 0z" fill="none" stroke="#d8dee0" stroke-width="1.300"/><circle cx="8" cy="5.500" r="1.600" fill="none" stroke="#e8edef"/>'],
  warn: [14, '<circle cx="8" cy="8" r="6.500" fill="#e07a24"/><path d="M8 4v5M8 10.500v2" stroke="#fff" stroke-width="1.800"/>'],
  quad: [15, '<path d="M2 2h12v12H2z" fill="#e4e2c8" stroke="#c9b83a" stroke-width="1.500"/><path d="M8 2v12M2 8h12" stroke="#a89830" stroke-width="1.400"/>']
};
const icon = n => { const [s, m] = ICONS[n]; return `<svg width="${s}" height="${s}" viewBox="0 0 16 16" fill="none">${m}</svg>`; };
document.querySelectorAll('[data-i]').forEach(e => { e.innerHTML = icon(e.dataset.i); });
const $ = id => document.getElementById(id);

/* shelf tabs: label, width */
const stabs = (id, list) => {
  $(id).innerHTML = list.map(([t, w], i) => `<div class="stab${i ? '' : ' on'}" style="width:${w}px"><span data-fit="${w - 11.5}">${t}</span></div>`).join('') + '<div class="splus">+</div><div class="scaret">▼</div>';
};
stabs('stabsA', [['Create', 32], ['Modify', 33], ['Model', 32], ['Polygon', 38], ['Deform', 35], ['Texture', 36], ['Rigging', 35], ['Muscles', 37], ['Characters', 45], ['Constraints', 48], ['Hair Utils', 40], ['Guide Process', 56], ['Guide Brushes', 56], ['Terrain FX', 43], ['Cloud FX', 39], ['Volume', 36]]);
stabs('stabsB', [['Lights and C…', 57], ['Collisions', 43], ['Particles', 40], ['Grains', 32], ['Vellum', 33], ['Rigid Bodies', 50], ['Particle Fluids', 56], ['Viscous Fluids', 55], ['Oceans', 36], ['Fluid Contai…', 58], ['Populate Con…', 62], ['Container Tools', 61], ['Pyro FX', 36], ['FEM', 24], ['Wires', 29], ['Crowds', 36], ['Drive Simula…', 57]]);

/* shelf tools: label, icon, cell width, label width */
const tools = (id, list) => {
  $(id).innerHTML = list.map(([t, ic, w, f]) => `<div class="tool${t.includes('<') ? ' two' : ''}" style="width:${w}px"><i>${icon(ic)}</i><span${t.includes('<') ? '' : ` data-fit="${f}"`}>${t}</span></div>`).join('');
};
tools('toolsA', [['Box', 'box', 32, 12], ['Sphere', 'sphere', 32, 22], ['Tube', 'tube', 32, 16], ['Torus', 'torus', 32, 18], ['Grid', 'grid', 32, 13], ['Null', 'nul', 32, 13], ['Line', 'line', 32, 13], ['Circle', 'circle', 32, 18], ['Curve', 'curve', 32, 18], ['Draw Curve', 'draw', 44, 36], ['Path', 'path', 30, 14], ['Spray Paint', 'spray', 46, 36], ['Font', 'font', 28, 14], ['Platonic<br>Solids', 'platonic', 58], ['L-System', 'lsys', 30, 28], ['Metaball', 'meta', 40, 27], ['File', 'file', 26, 11]]);
tools('toolsB', [['Camera', 'camd', 30, 24], ['Point Light', 'point', 44, 34], ['Spot Light', 'spot', 36, 32], ['Area Light', 'area', 42, 32], ['Geometry<br>Light', 'geo', 48], ['Volume Light', 'vol', 52, 41], ['Distant Light', 'dist', 42, 39], ['Environment<br>Light', 'env', 58], ['Sky Light', 'sky', 30, 28], ['GI Light', 'gi', 36, 24], ['Caustic Light', 'caustic', 44, 40], ['Portal Light', 'portal', 48, 36], ['Ambient Light', 'amb', 46, 43], ['Stereo<br>Camera', 'stereo', 58], ['VR<br>Camera', 'vr', 34], ['Switcher', 'switcher', 42, 27], ['Gamepad<br>Camera', 'pad', 44]]);

const ptabs = (id, list) => {
  $(id).innerHTML = list.map(([t, w, f], i) => `<div class="ptab${i ? '' : ' on'}" style="width:${w}px"><span data-fit="${f}">${t}</span><u></u></div>`).join('') + '<div class="pplus">+</div><div class="pend"><b></b>▼</div>';
};
ptabs('ptabsA', [['Scene View', 65, 39], ['Animation Editor', 83, 59], ['Render View', 69, 43], ['Composite View', 81, 55], ['Motion FX View', 75, 52], ['Geometry Spreadsheet', 101, 80]]);
ptabs('ptabsB', [['/obj/WORK', 64, 37], ['Tree View', 60, 34], ['Material Palette', 79, 55], ['Asset Browser', 74, 49]]);

/* side columns: icon, centre line, flags */
const column = (id, list) => {
  let end = 138;
  $(id).innerHTML = list.map(([n, c, k]) => { const m = c - 9 - end; end = c + 9; return `<div class="cell ${k || ''}" style="margin-top:${m}px">${icon(n)}</div>`; }).join('');
};
column('leftcol', [['coney', 153, 'dk arrow'], ['gridy', 172, 'on arrow'], ['cuby', 191, 'dk arrow'], ['arrow', 220, 'arrow'], ['lock', 243, 'on'], ['move', 264], ['rot', 286], ['scl', 308], ['pose', 330], ['handles', 352, 'arrow'], ['mgrid', 381, 'arrow'], ['mcurve', 403, 'arrow'], ['mpt', 424, 'arrow'], ['mag', 446, 'arrow'], ['cams', 476, 'on arrow'], ['wheel', 497], ['drum', 520, 'arrow'], ['flag', 693, 'arrow'], ['disc', 714, 'arrow']]);
column('rightcol', [['plane', 149.5, 'on arrow'], ['greenc', 169.500, 'arrow'], ['padlock', 188.500], ['bulbx', 208], ['ballw', 228, 'arrow'], ['bulb', 247, 'on arrow'], ['bulby', 265, 'arrow'], ['bulbw', 284, 'arrow'], ['ball', 306, 'on arrow'], ['glasses', 325], ['glassc', 344, 'arrow'], ['dot', 367], ['tick', 387], ['vec', 406], ['n12', 426], ['prim', 446], ['prim12', 465], ['corner', 485], ['uv', 505], ['axis', 524], ['circmenu', 544], ['abc', 563], ['pic', 583, 'on'], ['mark', 612, 'on arrow'], ['warn', 678], ['quad', 698, 'on'], ['eye', 717, 'arrow']]);

/* seeded noise keeps the surface identical on every load */
let seed = 7;
const rnd = () => { seed = (seed * 1664525 + 1013904223) % 4294967296; return seed / 4294967296; };
const jit = a => (rnd() - 0.5) * a;

/* ground grid: two families of lines through their vanishing points */
const family = (vx, x0, step) => {
  let minor = '', major = '';
  for (let k = -170; k <= 170; k++) {
    const x = x0 + step * k / 5, t = (760 - 40) / 660;
    const seg = `M${(vx + (x - vx) * 0.13).toFixed(1)} ${(40 + 660 * 0.13).toFixed(1)}L${(vx + (x - vx) * t).toFixed(1)} 760`;
    if (k % 5) minor += seg; else major += seg;
  }
  return `<path d="${minor}" stroke="#202020" stroke-width=".8"/><path d="${major}" stroke="#292929" stroke-width="1.200"/>`;
};
let scene = `<defs><linearGradient id="fade" x1="0" y1="0" x2="0" y2="1"><stop offset="0" stop-color="#05080b" stop-opacity=".5"/><stop offset=".3" stop-color="#000" stop-opacity=".35"/><stop offset=".6" stop-color="#000" stop-opacity="0"/></linearGradient></defs>`;
scene += family(-360, 178, 194) + family(1549, 58, 219) + '<rect x="32" y="131" width="791" height="595" fill="url(#fade)"/>';
[[252, 607, -25, '0.1'], [134, 665, -25, '0.11'], [612, 614, 35, '1.0'], [720, 684, 35, '1.5']].forEach(([x, y, r, t]) => { scene += `<text x="${x}" y="${y}" transform="rotate(${r} ${x} ${y})" font-size="9.500" fill="#2e2e2e">${t}</text>`; });

/* tangled fluid strands, drawn in a 3x space offset to (240,200) */
const layers = {};
const push = (c, w, d) => { const k = c + '|' + w; layers[k] = (layers[k] || '') + d; };
const shades = ['#a6a6a6', '#adadad', '#8e8e8e', '#b3b3b3'];
const strand = (pts, w, rough, c) => {
  let [px, py] = pts[0];
  for (let i = 1; i < pts.length; i++) {
    const [ax, ay] = pts[i - 1], [bx, by] = pts[i], L = Math.hypot(bx - ax, by - ay), n = Math.max(1, Math.round(L / 9));
    for (let k = 1; k <= n; k++) {
      const x = ax + (bx - ax) * k / n + jit(rough), y = ay + (by - ay) * k / n + jit(rough);
      push(c || shades[Math.floor(rnd() * 2)], Math.max(1, Math.round(w + jit(w * 1.1))), `M${px.toFixed(0)} ${py.toFixed(0)}L${x.toFixed(0)} ${y.toFixed(0)}`);
      if (rnd() < 0.15) push('#a0a0a0', 3, `M${x.toFixed(0)} ${y.toFixed(0)}l${jit(24).toFixed(0)} ${jit(28).toFixed(0)}`);
      px = x; py = y;
    }
  }
};
const P = s => s.trim().split(/\s+/).map(q => q.split(',').map(Number));
[['990,90 940,87 905,73 830,67 810,60 775,70', 4, 3], ['775,70 740,47 700,62 650,80 600,72 575,72 550,88 500,86 470,73 400,80 370,95 300,102 240,130 205,155 190,180 145,205 130,240 110,270 95,300 112,335', 8, 6],
 ['720,62 740,50 765,70', 10, 4], ['560,82 578,70 600,74', 10, 4],
 ['245,160 225,140 205,160 240,162', 7, 4], ['145,190 120,240 125,280 100,290', 6, 5], ['92,290 92,335', 13, 10], ['100,285 135,320 165,325 165,360', 9, 9], ['135,318 165,335 190,360 230,370 280,362', 13, 11], ['190,345 240,362 290,350 330,345', 7, 9],
 ['265,250 260,290 250,330', 8, 9], ['262,300 275,330', 10, 9], ['265,250 290,320 310,345', 5, 7], ['275,285 310,230 340,190 380,180 390,150 430,130 480,135 520,122 565,125', 7, 6], ['290,280 330,240 400,215 410,180 470,160 500,150', 6, 6], ['540,118 572,112', 9, 4],
 ['380,190 385,230 400,180', 9, 9], ['452,175 454,215', 3, 2], ['500,165 560,160 600,150 640,150 700,130 760,125 830,135 900,140 910,120 950,150 1000,158 1010,170 1050,185 1100,210 1110,250 1080,270 1060,300 1040,330 1040,370 1070,390 1070,445', 7, 7],
 ['500,165 540,150 600,160 640,180', 12, 10], ['640,185 700,188 738,192 735,155 790,172 830,185', 7, 5], ['640,150 660,125 710,135 720,170', 9, 9], ['560,150 620,135 700,150 790,145 850,155', 5, 8], ['815,175 850,190 890,185', 12, 8], ['890,185 925,200 952,218', 6, 5], ['835,205 850,175', 10, 7], ['900,130 910,118 925,150', 7, 5], ['990,140 1005,200', 10, 12], ['1035,200 1045,235 1060,205 1090,200 1095,225 1115,250', 8, 12], ['870,160 950,165 1010,170', 4, 4],
 ['1060,310 1090,330 1110,370 1135,420 1130,450 1143,490 1135,515 1100,548 1050,562 1000,580 940,600 880,600 830,632 770,638 700,625', 9, 7],
 ['205,385 185,440 145,490 155,530 185,552 200,540', 6, 6], ['260,380 210,410 185,440 190,490 215,520 250,550 330,560 400,548 450,562 500,580 560,590 640,580', 7, 8],
 ['200,545 140,600 110,640 80,690 75,710 110,740 120,770 160,805 220,840 270,858 300,858 330,875 380,895 430,920 500,925 545,922 560,903 640,910 690,885 750,875 820,865 900,855 940,825 1000,800 1050,775 1080,768 1105,800 1140,765 1143,740 1130,680 1110,630 1090,590 1060,560', 8, 5],
 ['85,690 80,750 110,745', 6, 5], ['200,560 210,590 240,600 225,640 210,680 215,720 250,738 290,745 335,795 370,788 430,808 480,818 540,830 590,810 640,790 720,790 780,812 850,785 920,760 990,733 990,690 970,620 940,600', 7, 5],
 ['225,680 270,710 350,735 430,752 500,757 560,745', 6, 4], ['545,735 600,770 660,790 700,790 740,775 800,745 850,725 880,700 920,665 965,640', 6, 4], ['720,750 722,790 740,775', 11, 5],
 ['250,590 330,600 380,635 430,630 480,650 560,658 640,650 700,655', 9, 9], ['340,620 400,665 450,660 520,645', 6, 10], ['470,680 480,720 520,720 545,695 580,735', 4, 4], ['440,675 520,680 570,700 580,735 640,715 630,690', 4, 4], ['640,700 690,690 710,685', 9, 7], ['690,690 710,700', 12, 8], ['715,715 745,740 770,710 785,690 775,640', 6, 5],
 ['820,750 850,715 880,715', 6, 7], ['1050,560 1060,500 1000,470 940,500 900,560 860,590', 6, 8], ['900,560 930,590 970,580 960,550', 6, 7], ['270,180 285,190 268,198', 3, 3], ['240,465 270,490 290,460 250,500 320,515', 5, 6],
 ['880,400 950,395 1010,360 1060,375', 5, 8], ['900,440 960,410 1040,400', 5, 9], ['935,520 960,480 1000,460 1010,400 1040,370', 7, 9], ['860,350 930,330 1000,300 1020,280', 6, 9], ['910,300 960,265 1000,260', 5, 10],
 ['350,300 355,270 385,260 400,290 360,310 400,330', 5, 7], ['420,240 500,232 600,238 700,225 790,235', 6, 10], ['300,330 350,320 410,280 450,250', 6, 9], ['320,500 350,470 400,440 450,400', 5, 10], ['330,560 350,510 400,500 450,470', 6, 10], ['300,400 350,380 370,420 360,470', 5, 10]
].forEach(([s, w, r]) => strand(P(s), w, r));
/* inner tangle: fragments of flattened ellipses with branching twigs */
for (let n = 0; n < 270; n++) {
  const f = 0.15 + 0.85 * Math.pow(rnd(), 0.6), a0 = rnd() * Math.PI * 2, span = 0.15 + rnd() * 0.5, cy = 415 + jit(110);
  const pts = [];
  for (let k = 0; k <= 6; k++) { const a = a0 + span * k / 6; pts.push([660 + 360 * f * Math.cos(a) + jit(20), cy + 165 * f * Math.sin(a) + jit(22)]); }
  strand(pts, 3 + rnd() * 4, 9, rnd() < 0.2 ? shades[2] : shades[Math.floor(rnd() * 2)]);
}
for (let n = 0; n < 230; n++) {
  const a = rnd() * 6.283, f = Math.sqrt(rnd()), x = 650 + 360 * f * Math.cos(a), y = 415 + 200 * f * Math.sin(a);
  strand([[x, y], [x + jit(40), y + jit(55)], [x + jit(60), y + jit(60)]], 4, 9, shades[n % 4]);
}
for (let n = 0; n < 42; n++) {
  const x = 350 + rnd() * 480, y = 372 + (x - 350) * 0.1 + jit(110);
  strand([[x, y], [x + 35 + jit(20), y + jit(24)]], 14, 11, shades[n % 2]);
}
let mesh = '';
for (const k in layers) { const [c, w] = k.split('|'); mesh += `<path d="${layers[k]}" stroke="${c}" stroke-width="${w}" stroke-linecap="${w > 7 ? 'butt' : 'round'}"/>`; }
mesh += '<circle cx="1000" cy="226" r="8" fill="#aaa"/><path d="M1156 184l18 16-12-6zM1118 170l6 3M1144 163l6 2" fill="#aaa" stroke="#aaa" stroke-width="3"/><path d="M625 918l10 0-4 12 14-4M628 932l18-16" fill="none" stroke="#b8303c" stroke-width="6"/>';
scene += `<g transform="translate(240 200) scale(.33333)">${mesh}</g>`;
scene += '<path d="M482 144.500h13" stroke="#bbb" stroke-width="1.500"/><path d="M178 625l7-6 7 3-8 8z" fill="#555"/><path d="M180 624l8-3M181 627l9-4" stroke="#777"/>';
scene += '<path d="M48.500 712V699" stroke="#2fae3c" stroke-width="1.300"/><path d="M48.500 711l8 4" stroke="#c02a30" stroke-width="1.300"/><path d="M48.500 711l-6 3" stroke="#2b4ea8" stroke-width="1.300"/><g font-size="9" font-weight="bold"><text x="48" y="699" fill="#2fae3c">y</text><text x="57" y="715" fill="#c02a30">x</text><text x="38" y="715" fill="#2b4ea8">z</text></g>';
$('scene').innerHTML = scene;

/* network */
const wire = (d, c, o) => `<path d="${d}" fill="none" stroke="${c || '#c4b38a'}" stroke-width="1" opacity="${o || 0.75}"/>`;
const node = (x, y, c, label, lx, o = {}) => {
  const sl = o.slant || 0, w = 12, h = 4.500, ink = o.ink || '#5a6a78';
  let s = `<path d="M${x - w + sl} ${y - h}H${x + w + sl}L${x + w - sl} ${y + h}H${x - w - sl}z" fill="${c}" stroke="${c}" stroke-width=".6" stroke-linejoin="round"/>`;
  s += `<path d="M${x - 8 + sl} ${y - 3}L${x - 8 - sl} ${y + 3}M${x - 5 + sl} ${y - 3}L${x - 5 - sl} ${y + 3}M${x + 6 + sl} ${y - 3}L${x + 6 - sl} ${y + 3}M${x + 9 + sl} ${y - 3}L${x + 9 - sl} ${y + 3}" stroke="${ink}" stroke-width=".9" opacity=".8"/>`;
  s += o.glyph ? o.glyph : `<path d="M${x - 2.500} ${y - 2}h3l1 4h-3z" fill="none" stroke="${o.mark || '#4b5566'}" stroke-width="1.200"/>`;
  s += o.multi ? [-9, -4.500, 0, 4.500].map(d => `<circle cx="${x + d + 2}" cy="${y - 6}" r="1.100" fill="#d8cfc0"/>`).join('') : `<circle cx="${x}" cy="${y - 6}" r="1" fill="#d8cfc0"/>`;
  s += `<circle cx="${x}" cy="${y + 6}" r="1.100" fill="#d8cfc0"/>`;
  if (label) s += `<text x="${lx}" y="${y + 2}" font-size="5.200" textLength="${o.lw}" fill="#d6cba4" opacity=".8">${label}</text>`;
  if (o.dot) s += `<circle cx="${o.dot[0]}" cy="${o.dot[1]}" r="1.700" fill="#cbe35e"/>`;
  return s;
};
let g = '<defs><linearGradient id="wl" gradientUnits="userSpaceOnUse" x1="850" y1="0" x2="1200" y2="0"><stop offset="0" stop-color="#555" stop-opacity="0"/><stop offset=".45" stop-color="#555"/><stop offset=".8" stop-color="#5470a8"/></linearGradient><linearGradient id="wr" gradientUnits="userSpaceOnUse" x1="1500" y1="0" x2="1214" y2="0"><stop offset="0" stop-color="#555" stop-opacity="0"/><stop offset=".4" stop-color="#555"/><stop offset=".75" stop-color="#5470a8"/></linearGradient></defs>';
g += '<rect x="886" y="130" width="613" height="415" fill="#917a38"/><path d="M886 544.500h613" stroke="#a8914a"/>';
g += '<text x="1402" y="160.500" font-size="17" font-weight="bold" textLength="89" fill="#a58f50">Geometry</text>';
g += wire('M1216.500 141L1210 200') + wire('M1216.500 141Q1218 146 1228 149L1256 157Q1264 159 1264.500 165') + wire('M1264.500 176Q1265 181 1256 184L1222 193Q1215 195 1214.500 200') + wire('M1216.800 212L1217 262M1217.200 273V309M1217 320L1206.500 365M1213.500 377L1211.500 459M1211 471Q1211 478 1202 478.500L1166 480') + wire('M1211 471L1210 545') + wire('M1210 545L1207.500 648M1206.500 663L1201.500 727', '#6484c4', 0.9);
g += wire('M850 575L1198 643Q1201 644 1201.500 648', 'url(#wl)', 1) + wire('M1500 592L1216 644Q1213 645 1212 648', 'url(#wr)', 1);
const yel = (x, y) => `<path d="M${x - 2} ${y - 2}h2v2h2v2" stroke="#d8b070" fill="none" stroke-width="1.500"/>`;
g += node(1217, 134, '#551b78', 'pointwrangle29', 1231, { lw: 37, ink: '#551b78', glyph: yel(1217, 134), dot: [1238.500, 140] });
g += node(1264.800, 170.500, '#58bcd0', 'transform36', 1278, { lw: 29, ink: '#236f8e', mark: '#255f80', dot: [1281.500, 176] });
g += node(1217, 206.500, '#551b78', 'pointwrangle30', 1231, { lw: 37, ink: '#551b78', glyph: yel(1217, 206.500), multi: 1, dot: [1238.500, 212] });
g += node(1217, 267.500, '#58bcd0', 'transform35', 1231, { lw: 29, ink: '#236f8e', mark: '#255f80', dot: [1234, 273] });
g += node(1217, 314.500, '#d6d2cc', 'attribdelete4', 1232, { lw: 30, slant: 1.200, mark: '#a04060', dot: [1239.500, 320.500] });
g += node(1214, 371, '#cfcbc4', 'pointvop15', 1228, { lw: 27, slant: 1.500, multi: 1, dot: [1231, 376.500] });
g += node(1211.500, 464.500, '#dad6d0', 'pointvelocity2', 1225, { lw: 33, glyph: '<path d="M1207.500 467v-2q4-6 8 0v2z" fill="#111"/>', dot: [1233, 470] });
g += '<circle cx="1157" cy="493" r="20.500" fill="#b3ac8a" opacity=".6"/><circle cx="1157.500" cy="493.500" r="13.500" fill="#cf9a80" opacity=".85"/>';
g += node(1157.500, 493.500, '#dcdcdc', 'particlefluidsurface4', 1171, { lw: 48, glyph: '<path d="M1157.500 490q3 4 0 7-3-3 0-7z" fill="#3f66a0"/>', dot: [1179, 499] }) + '<path d="M1165.500 489.500h3v8h-3z" fill="#2aa8d8"/><circle cx="1174" cy="499" r="1.500" fill="#777"/>';
g += '<text x="1231" y="202" font-size="3.500" textLength="33" fill="#7c7660">Attribute Wrangle</text><text x="1230" y="366" font-size="3.500" textLength="25" fill="#7c7660">Attribute VOP</text>';
g += '<rect x="1196" y="648.500" width="22" height="4" rx="2" fill="#c9c9c9"/><rect x="1194.500" y="651" width="25" height="10" rx="5" fill="#d9d9d9"/><path d="M1199 652v8M1202 652v8M1212 652v8M1215 652v8" stroke="#999"/><path d="M1205.500 653l4 2-4 4" stroke="#444" fill="none"/><circle cx="1207" cy="663" r="1.200" fill="#ddd"/><text x="1221" y="658.500" font-size="5.200" textLength="17.500" fill="#b5b5b5">merge5</text><circle cx="1223.800" cy="661.800" r="1.700" fill="#d6dc70"/>';
$('graph').innerHTML = g;

/* frame ruler */
const fx = f => 184.500 + (f - 1) * 8.606;
let tk = '<path d="M183 745.500H1303" stroke="#8d8d8d" stroke-width="1.200"/>', small = '', big = '';
for (let f = 1; f <= 130; f++) { if (f % 24) small += `M${fx(f).toFixed(1)} 742v7`; else big += `M${fx(f).toFixed(1)} 739.500v12`; }
tk += `<path d="${small}" stroke="#8a8a8a" stroke-width=".8"/><path d="${big}" stroke="#999" stroke-width="1"/>`;
[1, 24, 48, 72, 96, 120].forEach(f => { tk += `<text x="${fx(f)}" y="735.500" font-size="7.500" fill="#8d8d8d">${f}</text>`; });
tk += '<path d="M751.500 729h19v13.500h-6l-3.500 3.500-3.500-3.500h-6z" fill="#050505" stroke="#ddd"/><text x="761" y="739.500" font-size="9.500" text-anchor="middle" fill="#eee">68</text>';
$('ticks').innerHTML = tk;

/* tighten or loosen tracking so labels keep their column widths */
document.querySelectorAll('[data-fit]').forEach(e => {
  const n = e.textContent.length, w = e.getBoundingClientRect().width;
  e.style.letterSpacing = ((e.dataset.fit - w) / n).toFixed(3) + 'px';
});
```
